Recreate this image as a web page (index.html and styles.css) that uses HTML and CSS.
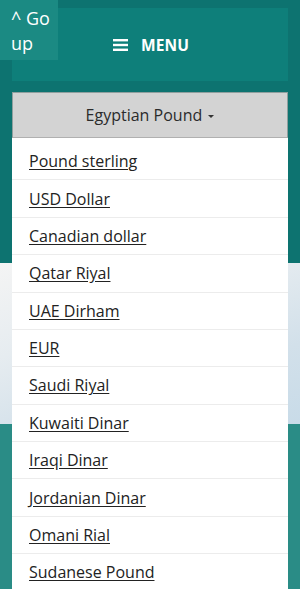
FILE: index.html
```html
<!DOCTYPE html>
<html>
<head>
<meta charset="utf-8">
<link rel="stylesheet" href="styles.css">
</head>
<body>
<div class="top">
  <nav class="navbar">
    <span class="menu-btn">
      <svg class="burger" width="15" height="14" viewBox="0 0 15 14"><rect x="0" y="1" width="15" height="2.4" fill="#fff"/><rect x="0" y="5.8" width="15" height="2.4" fill="#fff"/><rect x="0" y="10.6" width="15" height="2.4" fill="#fff"/></svg>
      <span class="menu-label">MENU</span>
    </span>
  </nav>
  <div class="dropdown">
    <button class="dd-toggle">Egyptian Pound <span class="caret"></span></button>
    <ul class="dd-menu">
      <li><a href="#">Pound sterling</a></li>
      <li><a href="#">USD Dollar</a></li>
      <li><a href="#">Canadian dollar</a></li>
      <li><a href="#">Qatar Riyal</a></li>
      <li><a href="#">UAE Dirham</a></li>
      <li><a href="#">EUR</a></li>
      <li><a href="#">Saudi Riyal</a></li>
      <li><a href="#">Kuwaiti Dinar</a></li>
      <li><a href="#">Iraqi Dinar</a></li>
      <li><a href="#">Jordanian Dinar</a></li>
      <li><a href="#">Omani Rial</a></li>
      <li><a href="#">Sudanese Pound</a></li>
    </ul>
  </div>
</div>
<div class="band"></div>
<div class="bottom"></div>
<a class="go-up" href="#">^ Go<br>up</a>
</body>
</html>
```
FILE: styles.css
```css
html, body {
  margin: 0;
  padding: 0;
}
body {
  font-family: "Open Sans", "DejaVu Sans", sans-serif;
  background: #2a8c86;
  overflow: hidden;
  height: 589px;
}
.top {
  background: #0d7370;
  height: 263px;
  padding: 8px 12px 0 12px;
  box-sizing: border-box;
}
.navbar {
  background: #0e7f7a;
  height: 73px;
  display: flex;
  align-items: center;
  justify-content: center;
}
.menu-btn {
  display: flex;
  align-items: center;
  color: #fff;
  margin-left: 2px;
}
.burger {
  display: block;
  margin-right: 13px;
}
.menu-label {
  font-weight: 700;
  font-size: 15.5px;
  letter-spacing: 0.1px;
}
.dropdown {
  position: relative;
  margin-top: 11px;
}
.dd-toggle {
  display: block;
  width: 100%;
  height: 46px;
  background: #d3d3d3;
  border: 1px solid #8f9f9e;
  border-bottom-color: #b0b0b0;
  font-family: "Open Sans", "DejaVu Sans", sans-serif;
  font-size: 16px;
  color: #2b2b2b;
  padding: 0;
  margin: 0;
}
.caret {
  display: inline-block;
  width: 0;
  height: 0;
  border-top: 3px solid #333;
  border-left: 3px solid transparent;
  border-right: 3px solid transparent;
  vertical-align: middle;
  margin-left: 2px;
}
.dd-menu {
  position: absolute;
  left: 0;
  right: 0;
  top: 46px;
  margin: 0;
  padding: 5px 0 0 0;
  list-style: none;
  background: #fff;
  z-index: 5;
}
.dd-menu li {
  border-bottom: 1px solid #ececec;
}
.dd-menu li a {
  display: block;
  padding: 7.2px 17px;
  line-height: 22px;
  font-size: 16px;
  color: #222;
  text-decoration: underline;
  text-underline-offset: 2px;
}
.band {
  height: 161px;
  background: linear-gradient(160deg, #f4f4f4 0%, #e6ecf0 35%, #d2e0ea 70%, #c8dbe8 100%);
}
.bottom {
  height: 200px;
  background: #2a8c86;
}
.go-up {
  position: absolute;
  left: 0;
  top: 0;
  width: 58px;
  height: 60px;
  box-sizing: border-box;
  padding: 6px 0 0 11px;
  background: #1b8a83;
  color: #fff;
  font-size: 18px;
  line-height: 25px;
  text-decoration: none;
  z-index: 10;
}
```
